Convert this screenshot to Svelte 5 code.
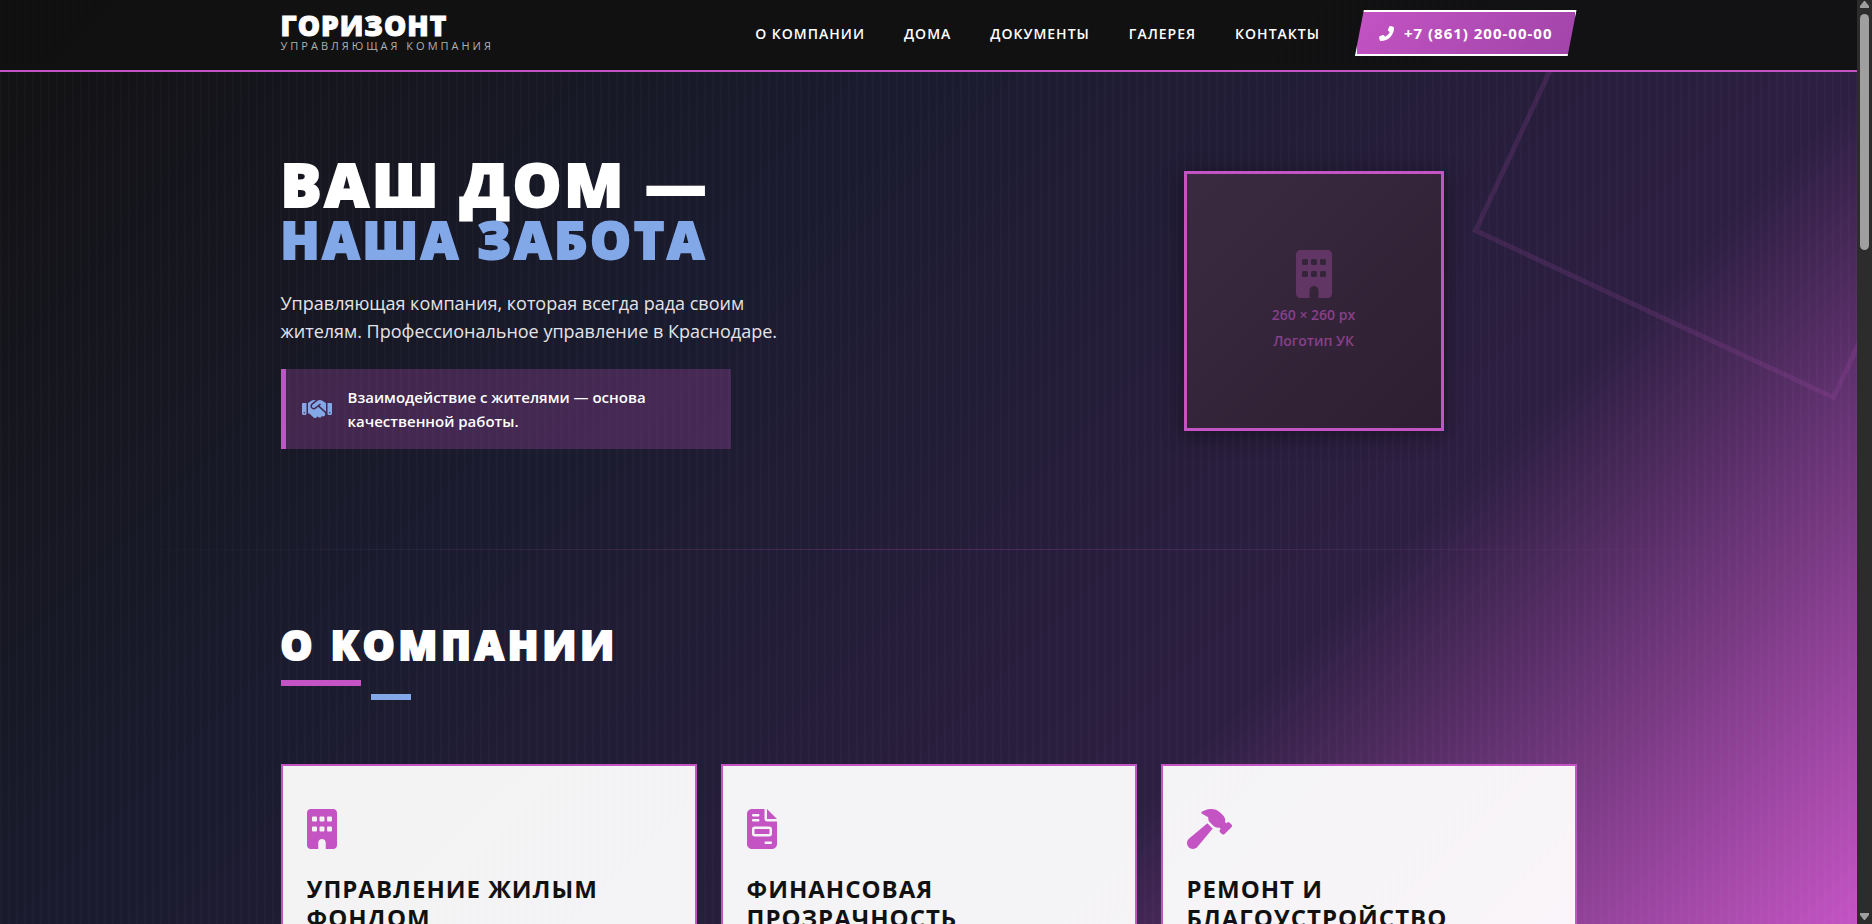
<script lang="ts">
  interface Icon {
    width: number;
    path: string;
  }

  const building: Icon = {
    width: 384,
    path: 'M48 0C21.5 0 0 21.5 0 48V464c0 26.5 21.5 48 48 48h96V432c0-26.5 21.5-48 48-48s48 21.5 48 48v80h96c26.5 0 48-21.5 48-48V48c0-26.5-21.5-48-48-48H48zM64 240c0-8.8 7.2-16 16-16h32c8.8 0 16 7.2 16 16v32c0 8.8-7.2 16-16 16H80c-8.8 0-16-7.2-16-16V240zm112-16h32c8.8 0 16 7.2 16 16v32c0 8.8-7.2 16-16 16H176c-8.8 0-16-7.2-16-16V240c0-8.8 7.2-16 16-16zm80 16c0-8.8 7.2-16 16-16h32c8.8 0 16 7.2 16 16v32c0 8.8-7.2 16-16 16H272c-8.8 0-16-7.2-16-16V240zM80 96h32c8.8 0 16 7.2 16 16v32c0 8.8-7.2 16-16 16H80c-8.8 0-16-7.2-16-16V112c0-8.8 7.2-16 16-16zm80 16c0-8.8 7.2-16 16-16h32c8.8 0 16 7.2 16 16v32c0 8.8-7.2 16-16 16H176c-8.8 0-16-7.2-16-16V112zM272 96h32c8.8 0 16 7.2 16 16v32c0 8.8-7.2 16-16 16H272c-8.8 0-16-7.2-16-16V112c0-8.8 7.2-16 16-16z',
  };

  const invoice: Icon = {
    width: 384,
    path: 'M64 0C28.7 0 0 28.7 0 64V448c0 35.3 28.7 64 64 64H320c35.3 0 64-28.7 64-64V160H256c-17.7 0-32-14.3-32-32V0H64zM256 0V128H384L256 0zM80 64h64c8.8 0 16 7.2 16 16s-7.2 16-16 16H80c-8.8 0-16-7.2-16-16s7.2-16 16-16zm0 64h64c8.8 0 16 7.2 16 16s-7.2 16-16 16H80c-8.8 0-16-7.2-16-16s7.2-16 16-16zm16 96H288c17.7 0 32 14.3 32 32v64c0 17.7-14.3 32-32 32H96c-17.7 0-32-14.3-32-32V256c0-17.7 14.3-32 32-32zm0 32v64H288V256H96zM240 416h64c8.8 0 16 7.2 16 16s-7.2 16-16 16H240c-8.8 0-16-7.2-16-16s7.2-16 16-16z',
  };

  const hammer: Icon = {
    width: 576,
    path: 'M413.5 237.5c-28.2 4.8-58.2-3.6-80-25.4l-38.1-38.1C280.4 159 272 138.8 272 117.6V105.5L192.3 62c-5.3-2.9-8.6-8.6-8.3-14.7s3.9-11.5 9.5-14l47.2-21C259.1 4.2 279 0 299.2 0h18.1c36.7 0 72 14 98.7 39.1l44.6 42c24.2 22.8 33.2 55.7 26.6 86L503 183l8-8c9.4-9.4 24.6-9.4 33.9 0l24 24c9.4 9.4 9.4 24.6 0 33.9l-88 88c-9.4 9.4-24.6 9.4-33.9 0l-24-24c-9.4-9.4-9.4-24.6 0-33.9l8-8-17.5-17.5zM27.4 377.1L260.9 182.6c3.5 4.9 7.5 9.6 11.8 14l38.1 38.1c6 6 12.4 11.2 19.2 15.7L134.9 484.6c-14.5 17.4-36 27.4-58.6 27.4C34.1 512 0 477.8 0 435.7c0-22.6 10.1-44.1 27.4-58.6z',
  };

  const handshake: Icon = {
    width: 640,
    path: 'M323.4 85.2l-96.8 78.4c-16.1 13-19.2 36.4-7 53.1c12.9 17.8 38 21.3 55.3 7.8l99.3-77.2c7-5.4 17-4.2 22.5 2.8s4.2 17-2.8 22.5l-20.9 16.2L512 316.8V128h-.7l-3.9-2.5L434.8 79c-15.3-9.8-33.2-15-51.4-15c-21.8 0-43 7.5-60 21.2zm22.8 124.4l-51.7 40.2C263 274.3 217.3 268 193.7 235.6c-22.2-30.5-16.6-73.1 12.7-96.8l83.2-67.3c-11.6-4.9-24.1-7.4-36.8-7.4C234 64 215.7 69.6 200 80l-72 48V352h28.2l91.4 83.4c19.6 17.9 49.9 16.5 67.8-3.1c5.5-6.1 9.2-13.2 11.1-20.6l17 15.6c19.5 17.9 49.9 16.6 67.8-2.9c4.5-4.9 7.8-10.6 9.9-16.5c19.4 13 45.8 10.3 62.1-7.5c17.9-19.5 16.6-49.9-2.9-67.8l-134.2-123zM16 128c-8.8 0-16 7.2-16 16V352c0 17.7 14.3 32 32 32H64c17.7 0 32-14.3 32-32V128H16zM48 320a16 16 0 1 1 0 32 16 16 0 1 1 0-32zM544 128V352c0 17.7 14.3 32 32 32h32c17.7 0 32-14.3 32-32V144c0-8.8-7.2-16-16-16H544zm32 208a16 16 0 1 1 32 0 16 16 0 1 1 -32 0z',
  };

  const links = [
    { href: '#about', label: 'О компании' },
    { href: '#houses', label: 'Дома' },
    { href: '#documents', label: 'Документы' },
    { href: '#gallery', label: 'Галерея' },
    { href: '#contacts', label: 'Контакты' },
  ];

  const services = [
    { icon: building, title: 'Управление жилым фондом' },
    { icon: invoice, title: 'Финансовая прозрачность' },
    { icon: hammer, title: 'Ремонт и благоустройство' },
  ];
</script>

{#snippet glyph(icon: Icon)}
  <svg class="glyph" viewBox="0 0 {icon.width} 512" fill="currentColor" aria-hidden="true">
    <path d={icon.path} />
  </svg>
{/snippet}

<div class="window">
  <div class="page">
    <header class="header">
      <div class="container header-inner">
        <a class="brand" href="#top">
          <span class="brand-name">Горизонт</span>
          <span class="brand-sub">Управляющая компания</span>
        </a>
        <div class="header-right">
          <nav class="nav">
            {#each links as link}
              <a href={link.href}>{link.label}</a>
            {/each}
          </nav>
          <a class="phone" href="tel:+78612000000">
            <svg viewBox="0 0 512 512" fill="currentColor" aria-hidden="true">
              <path
                transform="matrix(-1 0 0 1 512 0)"
                d="M164.9 24.6c-7.7-18.6-28-28.5-47.4-23.2l-88 24C12.1 30.2 0 46 0 64C0 311.4 200.6 512 448 512c18 0 33.8-12.1 38.6-29.5l24-88c5.3-19.4-4.6-39.7-23.2-47.4l-96-40c-16.3-6.8-35.2-2.1-46.3 11.6L304.7 368C234.3 334.7 177.3 277.7 144 207.3L193.3 167c13.7-11.2 18.4-30 11.6-46.3l-40-96z"
              />
            </svg>
            +7 (861) 200-00-00
          </a>
        </div>
      </div>
    </header>

    <main>
      <section class="hero" id="top">
        <div class="container hero-grid">
          <div class="hero-text">
            <h1>Ваш дом —<span>наша забота</span></h1>
            <p class="lead">
              Управляющая компания, которая всегда рада своим жителям. Профессиональное управление в Краснодаре.
            </p>
            <div class="motto">
              {@render glyph(handshake)}
              <p>Взаимодействие с жителями — основа качественной работы.</p>
            </div>
          </div>
          <div class="logo-box">
            {@render glyph(building)}
            <span>260 × 260 px</span>
            <span>Логотип УК</span>
          </div>
        </div>
      </section>

      <section class="about" id="about">
        <div class="container">
          <h2>О компании</h2>
          <div class="cards">
            {#each services as service}
              <article class="card">
                {@render glyph(service.icon)}
                <h3>{service.title}</h3>
              </article>
            {/each}
          </div>
        </div>
      </section>
    </main>
  </div>

  <div class="scrollbar" aria-hidden="true">
    <svg viewBox="0 0 9 7"><path d="M4 0h1l4 5v2H0V5z" /></svg>
    <div class="thumb"></div>
    <svg viewBox="0 0 9 7"><path d="M4 7h1l4-5V0H0v2z" /></svg>
  </div>
</div>

<style>
  :global(body) {
    margin: 0;
    background: #111111;
  }

  .window {
    display: flex;
    height: 100vh;
    font-family: 'Open Sans', 'Noto Sans', sans-serif;
    color: #ffffff;
  }

  .window *,
  .window *::before,
  .window *::after {
    box-sizing: border-box;
  }

  .page {
    flex: 1;
    min-width: 0;
    overflow: hidden;
    background:
      repeating-linear-gradient(90deg, rgba(255, 255, 255, 0.02) 0 2px, transparent 2px 8px),
      linear-gradient(135deg, #111111 0%, #1a1b2e 35%, #2d1f42 70%, #c454c4 100%);
  }

  .container {
    max-width: 1360px;
    margin: 0 auto;
    padding: 0 32px;
  }

  a {
    color: inherit;
    text-decoration: none;
  }

  .glyph {
    display: block;
    flex: none;
  }

  /* header */
  .header {
    position: relative;
    z-index: 1;
    background: rgba(17, 17, 17, 0.95);
    border-bottom: 2px solid #c454c4;
  }

  .header-inner {
    display: flex;
    justify-content: space-between;
    align-items: flex-start;
    height: 70px;
    padding-top: 10px;
  }

  .brand {
    display: flex;
    flex-direction: column;
    text-transform: uppercase;
  }

  .brand-name {
    font-size: 28px;
    font-weight: 800;
    line-height: 30px;
    letter-spacing: 1px;
    -webkit-text-stroke: 1px currentColor;
  }

  .brand-sub {
    font-size: 11px;
    line-height: 12px;
    letter-spacing: 3px;
    color: #b0b0b0;
  }

  .header-right {
    display: flex;
    align-items: center;
    gap: 35px;
  }

  .nav {
    display: flex;
    gap: 39px;
    font-size: 14px;
    font-weight: 600;
    letter-spacing: 1px;
    text-transform: uppercase;
    white-space: nowrap;
  }

  .phone {
    display: flex;
    align-items: center;
    gap: 10px;
    height: 46px;
    padding: 0 22px;
    border: 2px solid #ffffff;
    background: linear-gradient(135deg, #c454c4, #a044a8);
    clip-path: polygon(4% 0, 100% 0, 96% 100%, 0 100%);
    font-size: 15px;
    font-weight: 700;
    letter-spacing: 1px;
    white-space: nowrap;
  }

  .phone svg {
    width: 15px;
    height: 15px;
  }

  /* hero */
  .hero {
    position: relative;
    overflow: hidden;
    padding: 80px 0 101px;
  }

  .hero::before {
    content: '';
    position: absolute;
    top: -137px;
    right: -81px;
    width: 400px;
    height: 400px;
    border: 5px solid #c454c4;
    opacity: 0.15;
    transform: rotate(25deg);
  }

  .hero::after {
    content: '';
    position: absolute;
    left: 5%;
    right: 5%;
    bottom: 0;
    height: 1px;
    background: linear-gradient(90deg, transparent, #c454c4, transparent);
    opacity: 0.25;
  }

  .hero-grid {
    display: grid;
    grid-template-columns: 1fr 526px;
    align-items: center;
  }

  h1,
  h2 {
    margin: 0;
    font-weight: 800;
    text-transform: uppercase;
    -webkit-text-stroke: 2px currentColor;
  }

  h1 {
    font-size: 61px;
    line-height: 64px;
    letter-spacing: 3px;
  }

  h1 span {
    display: block;
    font-size: 51px;
    line-height: 46px;
    color: #82a8e8;
  }

  .lead {
    max-width: 520px;
    margin: 27px 0 24px;
    font-size: 18px;
    font-weight: 400;
    line-height: 28px;
    color: #e4e4e8;
  }

  .motto {
    display: flex;
    align-items: center;
    gap: 16px;
    max-width: 450px;
    padding: 16px;
    border-left: 5px solid #c454c4;
    background: rgba(196, 84, 196, 0.25);
    color: #82a8e8;
  }

  .motto .glyph {
    width: 30px;
    height: 24px;
  }

  .motto p {
    margin: 0;
    font-size: 15px;
    font-weight: 600;
    line-height: 24px;
    color: #ffffff;
  }

  .logo-box {
    justify-self: center;
    display: flex;
    flex-direction: column;
    align-items: center;
    justify-content: center;
    width: 260px;
    height: 260px;
    padding-top: 2px;
    border: 3px solid #c454c4;
    background: linear-gradient(135deg, #3b2b40, #2d1e32);
    box-shadow: 0 4px 20px rgba(0, 0, 0, 0.4);
    font-size: 14px;
    font-weight: 600;
    line-height: 26px;
    color: #874088;
  }

  .logo-box .glyph {
    width: 36px;
    height: 48px;
    margin-bottom: 4px;
    color: #623664;
  }

  /* about */
  .about {
    padding: 70px 0;
  }

  h2 {
    position: relative;
    padding-bottom: 30px;
    margin-bottom: 64px;
    font-size: 40px;
    line-height: 50px;
    letter-spacing: 4px;
  }

  h2::before,
  h2::after {
    content: '';
    position: absolute;
    height: 6px;
  }

  h2::before {
    left: 0;
    bottom: 14px;
    width: 80px;
    background: #c454c4;
  }

  h2::after {
    left: 90px;
    bottom: 0;
    width: 40px;
    background: #82a8e8;
  }

  .cards {
    display: grid;
    grid-template-columns: repeat(3, 1fr);
    gap: 24px;
  }

  .card {
    min-height: 320px;
    padding: 43px 24px;
    border: 2px solid #c454c4;
    background: rgba(255, 255, 255, 0.95);
    color: #c454c4;
  }

  .card .glyph {
    height: 40px;
  }

  .card h3 {
    margin: 25px 0 0;
    font-size: 24px;
    font-weight: 700;
    line-height: 29px;
    letter-spacing: 1px;
    text-transform: uppercase;
    color: #111111;
  }

  /* scrollbar */
  .scrollbar {
    display: flex;
    flex-direction: column;
    align-items: center;
    width: 15px;
    padding: 1px 0 4px;
    background: #2c2c2c;
  }

  .scrollbar svg {
    width: 9px;
    height: 7px;
    fill: #9f9f9f;
  }

  .thumb {
    width: 9px;
    height: 236px;
    margin: 6px 0 auto;
    border-radius: 5px;
    background: #9f9f9f;
  }
</style>
